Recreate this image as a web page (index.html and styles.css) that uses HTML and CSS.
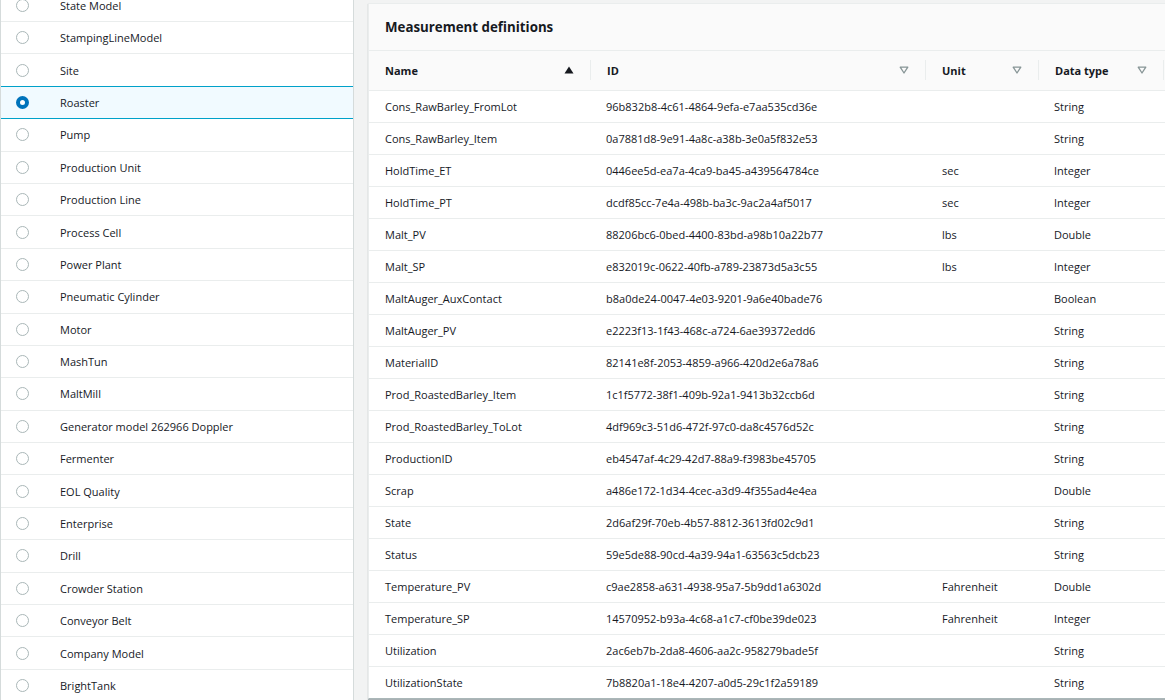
FILE: index.html
```html
<!DOCTYPE html>
<html>
<head>
<meta charset="utf-8">
<link rel="stylesheet" href="styles.css">
</head>
<body>
<div class="page">
  <aside class="models">
    <ul class="model-list">
      <li class="model"><span class="radio"></span><span class="label">State Model</span></li>
      <li class="model"><span class="radio"></span><span class="label">StampingLineModel</span></li>
      <li class="model"><span class="radio"></span><span class="label">Site</span></li>
      <li class="model selected"><span class="radio"></span><span class="label">Roaster</span></li>
      <li class="model"><span class="radio"></span><span class="label">Pump</span></li>
      <li class="model"><span class="radio"></span><span class="label">Production Unit</span></li>
      <li class="model"><span class="radio"></span><span class="label">Production Line</span></li>
      <li class="model"><span class="radio"></span><span class="label">Process Cell</span></li>
      <li class="model"><span class="radio"></span><span class="label">Power Plant</span></li>
      <li class="model"><span class="radio"></span><span class="label">Pneumatic Cylinder</span></li>
      <li class="model"><span class="radio"></span><span class="label">Motor</span></li>
      <li class="model"><span class="radio"></span><span class="label">MashTun</span></li>
      <li class="model"><span class="radio"></span><span class="label">MaltMill</span></li>
      <li class="model"><span class="radio"></span><span class="label">Generator model 262966 Doppler</span></li>
      <li class="model"><span class="radio"></span><span class="label">Fermenter</span></li>
      <li class="model"><span class="radio"></span><span class="label">EOL Quality</span></li>
      <li class="model"><span class="radio"></span><span class="label">Enterprise</span></li>
      <li class="model"><span class="radio"></span><span class="label">Drill</span></li>
      <li class="model"><span class="radio"></span><span class="label">Crowder Station</span></li>
      <li class="model"><span class="radio"></span><span class="label">Conveyor Belt</span></li>
      <li class="model"><span class="radio"></span><span class="label">Company Model</span></li>
      <li class="model"><span class="radio"></span><span class="label">BrightTank</span></li>
    </ul>
  </aside>

  <section class="panel">
    <header class="panel-header"><h2>Measurement definitions</h2></header>
    <table class="defs">
      <colgroup>
        <col class="c-name"><col class="c-id"><col class="c-unit"><col class="c-type"><col class="c-rest">
      </colgroup>
      <thead>
        <tr>
          <th><div class="th"><span>Name</span><svg class="sort" width="10" height="8" viewBox="0 0 10 8"><path d="M0.5 7.5 L5 0.5 L9.5 7.5 Z" fill="#16191f"/></svg><i class="divider"></i></div></th>
          <th><div class="th"><span>ID</span><svg class="sort" width="10" height="8" viewBox="0 0 10 8"><path d="M1.2 1.2 L8.8 1.2 L5 7 Z" fill="none" stroke="#879596" stroke-width="1.3" stroke-linejoin="round"/></svg><i class="divider"></i></div></th>
          <th><div class="th"><span>Unit</span><svg class="sort" width="10" height="8" viewBox="0 0 10 8"><path d="M1.2 1.2 L8.8 1.2 L5 7 Z" fill="none" stroke="#879596" stroke-width="1.3" stroke-linejoin="round"/></svg><i class="divider"></i></div></th>
          <th><div class="th"><span>Data type</span><svg class="sort" width="10" height="8" viewBox="0 0 10 8"><path d="M1.2 1.2 L8.8 1.2 L5 7 Z" fill="none" stroke="#879596" stroke-width="1.3" stroke-linejoin="round"/></svg><i class="divider"></i></div></th>
          <th></th>
        </tr>
      </thead>
      <tbody>
        <tr><td>Cons_RawBarley_FromLot</td><td>96b832b8-4c61-4864-9efa-e7aa535cd36e</td><td></td><td>String</td><td></td></tr>
        <tr><td>Cons_RawBarley_Item</td><td>0a7881d8-9e91-4a8c-a38b-3e0a5f832e53</td><td></td><td>String</td><td></td></tr>
        <tr><td>HoldTime_ET</td><td>0446ee5d-ea7a-4ca9-ba45-a439564784ce</td><td>sec</td><td>Integer</td><td></td></tr>
        <tr><td>HoldTime_PT</td><td>dcdf85cc-7e4a-498b-ba3c-9ac2a4af5017</td><td>sec</td><td>Integer</td><td></td></tr>
        <tr><td>Malt_PV</td><td>88206bc6-0bed-4400-83bd-a98b10a22b77</td><td>lbs</td><td>Double</td><td></td></tr>
        <tr><td>Malt_SP</td><td>e832019c-0622-40fb-a789-23873d5a3c55</td><td>lbs</td><td>Integer</td><td></td></tr>
        <tr><td>MaltAuger_AuxContact</td><td>b8a0de24-0047-4e03-9201-9a6e40bade76</td><td></td><td>Boolean</td><td></td></tr>
        <tr><td>MaltAuger_PV</td><td>e2223f13-1f43-468c-a724-6ae39372edd6</td><td></td><td>String</td><td></td></tr>
        <tr><td>MaterialID</td><td>82141e8f-2053-4859-a966-420d2e6a78a6</td><td></td><td>String</td><td></td></tr>
        <tr><td>Prod_RoastedBarley_Item</td><td>1c1f5772-38f1-409b-92a1-9413b32ccb6d</td><td></td><td>String</td><td></td></tr>
        <tr><td>Prod_RoastedBarley_ToLot</td><td>4df969c3-51d6-472f-97c0-da8c4576d52c</td><td></td><td>String</td><td></td></tr>
        <tr><td>ProductionID</td><td>eb4547af-4c29-42d7-88a9-f3983be45705</td><td></td><td>String</td><td></td></tr>
        <tr><td>Scrap</td><td>a486e172-1d34-4cec-a3d9-4f355ad4e4ea</td><td></td><td>Double</td><td></td></tr>
        <tr><td>State</td><td>2d6af29f-70eb-4b57-8812-3613fd02c9d1</td><td></td><td>String</td><td></td></tr>
        <tr><td>Status</td><td>59e5de88-90cd-4a39-94a1-63563c5dcb23</td><td></td><td>String</td><td></td></tr>
        <tr><td>Temperature_PV</td><td>c9ae2858-a631-4938-95a7-5b9dd1a6302d</td><td>Fahrenheit</td><td>Double</td><td></td></tr>
        <tr><td>Temperature_SP</td><td>14570952-b93a-4c68-a1c7-cf0be39de023</td><td>Fahrenheit</td><td>Integer</td><td></td></tr>
        <tr><td>Utilization</td><td>2ac6eb7b-2da8-4606-aa2c-958279bade5f</td><td></td><td>String</td><td></td></tr>
        <tr><td>UtilizationState</td><td>7b8820a1-18e4-4207-a0d5-29c1f2a59189</td><td></td><td>String</td><td></td></tr>
      </tbody>
    </table>
  </section>
</div>
</body>
</html>
```

FILE: styles.css
```css
* { box-sizing: border-box; }
html, body {
  margin: 0;
  padding: 0;
  width: 1165px;
  height: 700px;
  overflow: hidden;
  background: #f2f3f3;
  font-family: "Open Sans", "Liberation Sans", sans-serif;
  font-size: 11px;
  color: #16191f;
}
.page {
  display: flex;
  align-items: flex-start;
  gap: 14px;
  height: 700px;
}
.models {
  flex: 0 0 354px;
  height: 700px;
  background: #fff;
  border-left: 1px solid #d5dbdb;
  border-right: 1px solid #d5dbdb;
  overflow: hidden;
}
.model-list {
  list-style: none;
  margin: -10.4px 0 0 0;
  padding: 0;
}
.model {
  display: flex;
  align-items: center;
  height: 32.4px;
  border-bottom: 1px solid #eaeded;
  padding-left: 15px;
}
.model.selected {
  background: #f1faff;
  border: 1px solid #00a1c9;
  margin-top: -1px;
  margin-left: -1px;
  margin-right: -1px;
  height: 33.4px;
  padding-left: 15px;
}
.radio {
  width: 13px;
  height: 13px;
  border-radius: 50%;
  border: 1px solid #aab7b8;
  background: #fff;
  flex: 0 0 auto;
}
.selected .radio {
  border: 4px solid #0073bb;
}
.label {
  margin-left: 31px;
}

.panel {
  flex: 0 0 820px;
  margin-top: 3px;
  background: #fff;
  border: 1px solid #eaeded;
  border-bottom: 1px solid #aab7b8;
  box-shadow: 0 1px 1px rgba(0,28,36,0.3);
}
.panel-header {
  height: 47px;
  background: #fafafa;
  border-bottom: 1px solid #eaeded;
  display: flex;
  align-items: center;
  padding-left: 16px;
}
.panel-header h2 {
  margin: 0;
  font-size: 13.3px;
  font-weight: 700;
  color: #16191f;
}
.defs {
  border-collapse: collapse;
  table-layout: fixed;
  width: 818px;
}
.c-name { width: 222px; }
.c-id { width: 335px; }
.c-unit { width: 113px; }
.c-type { width: 125px; }
.c-rest { width: 23px; }
.defs th {
  height: 39px;
  background: #fafafa;
  border-bottom: 1px solid #eaeded;
  padding: 0;
  text-align: left;
  font-weight: 700;
  color: #16191f;
}
.th {
  display: flex;
  align-items: center;
  height: 38px;
  padding-left: 16px;
}
.th span { flex: 1; }
.sort { margin-right: 16px; flex: 0 0 auto; }
.divider {
  width: 1px;
  height: 20px;
  background: #eaeded;
  flex: 0 0 auto;
}
.defs td {
  height: 32px;
  padding: 0 0 0 16px;
  border-bottom: 1px solid #eaeded;
  white-space: nowrap;
  overflow: hidden;
}
.defs td:nth-child(2),
.defs td:nth-child(4) { padding-left: 15px; }
.defs tbody tr:last-child td { border-bottom: none; }
```
